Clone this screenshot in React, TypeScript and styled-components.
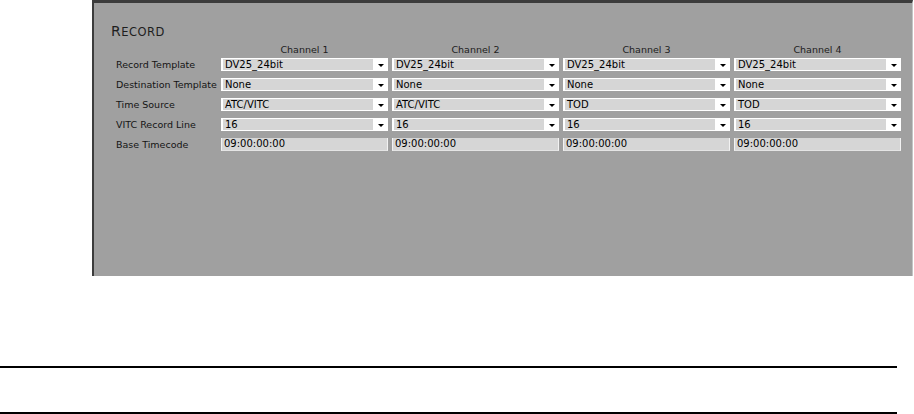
import React from 'react';
import styled, {createGlobalStyle} from 'styled-components';

const GlobalStyle = createGlobalStyle`
  html, body {
    margin: 0;
    padding: 0;
    background: #ffffff;
  }
  body {
    font-family: "DejaVu Sans", Verdana, sans-serif;
  }
`;

const Page = styled.div`
  width: 914px;
  height: 414px;
  overflow: hidden;
  display: flex;
  flex-direction: column;
`;

const Panel = styled.section`
  box-sizing: border-box;
  margin-left: 92px;
  width: 821px;
  height: 276px;
  background: #a0a0a0;
  border-top: 3px solid #3c3c3c;
  border-left: 2px solid #3c3c3c;
  border-right: 1px solid #c4c4c4;
  padding: 20px 0 0 17px;
`;

const Title = styled.h2`
  margin: 0;
  font-weight: normal;
  font-size: 14px;
  line-height: 16px;
  color: #1e1e1e;
  letter-spacing: 0.5px;
`;

const Small = styled.span`
  font-size: 11.5px;
`;

const Table = styled.div`
  margin: 4px 0 0 5px;
  display: flex;
  flex-direction: column;
  gap: 7px;
`;

const Row = styled.div<{$head?: boolean}>`
  display: grid;
  grid-template-columns: 101px repeat(4, 167px);
  column-gap: 4px;
  height: ${p => (p.$head ? '12px' : '13px')};
  margin-bottom: ${p => (p.$head ? '-5px' : '0')};
`;

const ChannelHead = styled.div`
  font-size: 9.5px;
  line-height: 12px;
  text-align: center;
  color: #202020;
`;

const Label = styled.div`
  font-size: 9.5px;
  line-height: 13px;
  color: #141414;
  white-space: nowrap;
`;

const Select = styled.div`
  box-sizing: border-box;
  display: flex;
  height: 13px;
  background: #ffffff;
  padding: 1px 0 1px 2px;
`;

const SelectValue = styled.div`
  flex: 1;
  background: #d6d6d6;
  font-size: 10px;
  line-height: 11px;
  padding-left: 2px;
  color: #000;
  white-space: nowrap;
`;

const Arrow = styled.div`
  width: 15px;
  display: flex;
  align-items: center;
  justify-content: center;
  padding-top: 2px;
  box-sizing: border-box;

  &::after {
    content: '';
    border-left: 3px solid transparent;
    border-right: 3px solid transparent;
    border-top: 3px solid #000;
  }
`;

const TextField = styled.div`
  box-sizing: border-box;
  height: 13px;
  background: #d6d6d6;
  border-left: 1px solid #f2f2f2;
  border-right: 1px solid #f2f2f2;
  border-bottom: 1px solid #e4e4e4;
  font-size: 10px;
  line-height: 12px;
  padding-left: 2px;
  color: #000;
  white-space: nowrap;
`;

const Rule = styled.hr<{$gap: number}>`
  margin: ${p => p.$gap}px 0 0 0;
  width: 897px;
  height: 2px;
  border: none;
  background: #000;
`;

const channels = ['Channel 1', 'Channel 2', 'Channel 3', 'Channel 4'];

const selects: {label: string; values: string[]}[] = [
    {label: 'Record Template', values: ['DV25_24bit', 'DV25_24bit', 'DV25_24bit', 'DV25_24bit']},
    {label: 'Destination Template', values: ['None', 'None', 'None', 'None']},
    {label: 'Time Source', values: ['ATC/VITC', 'ATC/VITC', 'TOD', 'TOD']},
    {label: 'VITC Record Line', values: ['16', '16', '16', '16']},
];

const Dropdown = ({value}: {value: string}) => (
    <Select>
        <SelectValue>{value}</SelectValue>
        <Arrow/>
    </Select>
);

export default function App() {
    return (
        <Page>
            <GlobalStyle/>
            <Panel>
                <Title>R<Small>ECORD</Small></Title>
                <Table>
                    <Row $head>
                        <div/>
                        {channels.map(c => <ChannelHead key={c}>{c}</ChannelHead>)}
                    </Row>
                    {selects.map(s => (
                        <Row key={s.label}>
                            <Label>{s.label}</Label>
                            {s.values.map((v, i) => <Dropdown key={i} value={v}/>)}
                        </Row>
                    ))}
                    <Row>
                        <Label>Base Timecode</Label>
                        {channels.map(c => <TextField key={c}>09:00:00:00</TextField>)}
                    </Row>
                </Table>
            </Panel>
            <Rule $gap={90}/>
            <Rule $gap={44}/>
        </Page>
    );
}
